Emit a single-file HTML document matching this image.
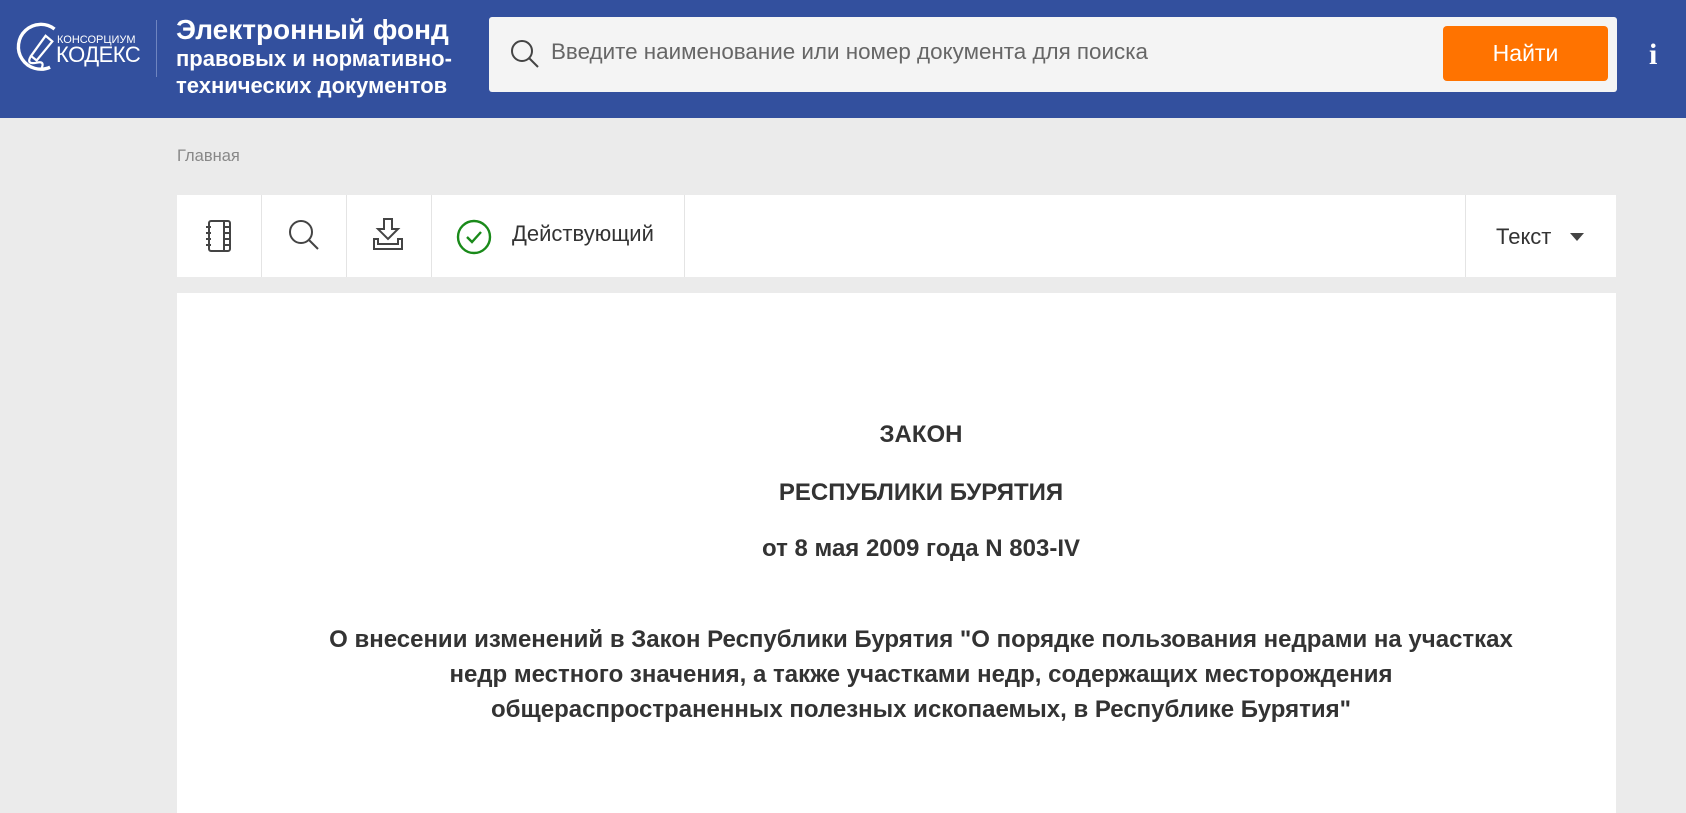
<!DOCTYPE html>
<html><head><meta charset="utf-8"><style>
*{margin:0;padding:0;box-sizing:border-box}
body{width:1686px;height:799px;overflow:hidden;background:#ebebeb;font-family:"Liberation Sans",Arial,sans-serif;position:relative}
.hdr{position:absolute;left:0;top:0;width:1686px;height:118px;background:#33509e}
.abs{position:absolute}
.t1{left:176px;top:14px;color:#fff;font-weight:bold;font-size:28px;line-height:32px}
.t2{left:176px;top:45px;color:#fff;font-weight:bold;font-size:22px;line-height:27px}
.search{left:489px;top:17px;width:1128px;height:75px;background:#f4f4f4;border-radius:3px}
.btn{left:1443px;top:26px;width:165px;height:55px;background:#ff7300;border-radius:4px;color:#fff;font-size:23px;text-align:center;line-height:55px}
.ph{left:551px;top:39px;font-size:22.4px;color:#666}
.bc{left:177px;top:147px;font-size:16.5px;color:#888}
.tb{left:177px;top:195px;width:1439px;height:82px;background:#fff}
.div{position:absolute;top:0;width:1px;height:82px;background:#e4e4e4}
.card{left:177px;top:293px;width:1439px;height:520px;background:#fff}
.doc{position:absolute;left:0;width:1842px;text-align:center;font-weight:bold;color:#333;font-size:24px}
</style></head><body>
<div class="hdr"></div>
<svg class="abs" style="left:12px;top:20px" width="56" height="54" viewBox="0 0 50 48" fill="none" stroke="#fff" stroke-width="3">
<path d="M38 8 A20 20 0 1 0 34 42"/><path d="M17 32 L30 14 L36 19 L22 36 Z" stroke-width="2"/><path d="M17 32 Q12 40 22 38 Q30 36 26 44" stroke-width="2"/></svg>
<div class="abs" style="left:57px;top:34px;color:#fff;font-size:11px">КОНСОРЦИУМ</div>
<div class="abs" style="left:56px;top:44px;color:#fff;font-size:22px;line-height:22px;letter-spacing:-0.5px">КОДЕКС</div>
<div class="abs" style="left:156px;top:20px;width:1px;height:57px;background:#6f85c0"></div>
<div class="abs t1">Электронный фонд</div>
<div class="abs t2">правовых и нормативно-<br>технических документов</div>
<div class="abs search"></div>
<svg class="abs" style="left:509px;top:38px" width="32" height="32" viewBox="0 0 32 32" fill="none" stroke="#444" stroke-width="2"><circle cx="13" cy="13" r="10"/><path d="M20.5 20.5 L29 29"/></svg>
<div class="abs ph">Введите наименование или номер документа для поиска</div>
<div class="abs btn">Найти</div>
<div class="abs" style="left:1649px;top:38px;color:#fff;font-family:'Liberation Serif',serif;font-weight:bold;font-size:30px">i</div>
<div class="abs bc">Главная</div>
<div class="abs tb">
<div class="div" style="left:84px"></div><div class="div" style="left:169px"></div><div class="div" style="left:254px"></div><div class="div" style="left:507px"></div><div class="div" style="left:1288px"></div>
<svg class="abs" style="left:28px;top:24px" width="30" height="34" viewBox="0 0 30 34" fill="none" stroke="#444" stroke-width="2"><rect x="4" y="2" width="21" height="30" rx="2"/><path d="M19 2 V32 M19 8 H25 M19 14 H25 M19 20 H25 M19 26 H25 M1 8 H6 M1 14 H6 M1 20 H6 M1 26 H6"/></svg>
<svg class="abs" style="left:110px;top:23px" width="34" height="34" viewBox="0 0 34 34" fill="none" stroke="#444" stroke-width="2"><circle cx="14" cy="14" r="11"/><path d="M22 22 L31 31"/></svg>
<svg class="abs" style="left:195px;top:22px" width="34" height="36" viewBox="0 0 34 36" fill="none" stroke="#444" stroke-width="2"><path d="M12 2 H20 V12 H26 L16 22 L6 12 H12 Z"/><path d="M2 22 V32 H30 V22 H26 V27 H6 V22 Z"/></svg>
<svg class="abs" style="left:279px;top:24px" width="36" height="36" viewBox="0 0 36 36" fill="none" stroke="#1a8a1a" stroke-width="2.4"><circle cx="18" cy="18" r="16"/><path d="M11 18 L16 23 L25 13"/></svg>
<div class="abs" style="left:335px;top:26px;font-size:22px;color:#333">Действующий</div>
<div class="abs" style="left:1319px;top:29px;font-size:22px;color:#333">Текст</div>
<svg class="abs" style="left:1392px;top:37px" width="16" height="10"><path d="M1 1 H15 L8 9 Z" fill="#444"/></svg>
</div>
<div class="abs card"></div>
<div class="doc" style="top:421px">ЗАКОН</div>
<div class="doc" style="top:479px">РЕСПУБЛИКИ БУРЯТИЯ</div>
<div class="doc" style="top:535px">от 8 мая 2009 года N 803-IV</div>
<div class="doc" style="top:622px;line-height:35px">О внесении изменений в Закон Республики Бурятия "О порядке пользования недрами на участках<br>недр местного значения, а также участками недр, содержащих месторождения<br>общераспространенных полезных ископаемых, в Республике Бурятия"</div>
</body></html>
